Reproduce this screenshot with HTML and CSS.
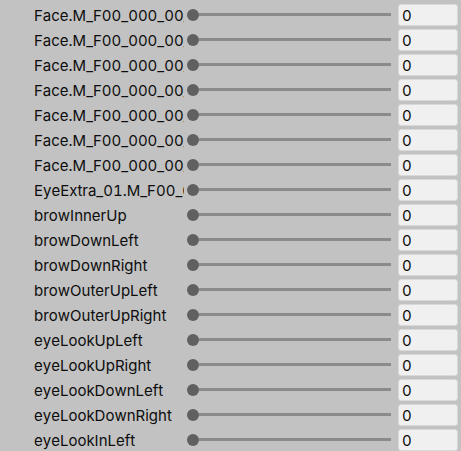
FILE: index.html
```html
<!DOCTYPE html>
<html lang="en">
<head>
    <meta charset="UTF-8">
    <meta name="viewport" content="width=device-width, initial-scale=1.0">
    <title>Blend Shapes</title>
    <link rel="stylesheet" href="styles.css">
</head>
<body>
    <div class="blendshapes" id="blendshapes"></div>

    <script>
        const shapes = [
            "Face.M_F00_000_00_Fcl_ALL_Neutral",
            "Face.M_F00_000_00_Fcl_ALL_Angry",
            "Face.M_F00_000_00_Fcl_ALL_Fun",
            "Face.M_F00_000_00_Fcl_ALL_Joy",
            "Face.M_F00_000_00_Fcl_ALL_Sorrow",
            "Face.M_F00_000_00_Fcl_ALL_Surprised",
            "Face.M_F00_000_00_Fcl_BRW_Angry",
            "EyeExtra_01.M_F00_000_00_EyeExtra_On",
            "browInnerUp",
            "browDownLeft",
            "browDownRight",
            "browOuterUpLeft",
            "browOuterUpRight",
            "eyeLookUpLeft",
            "eyeLookUpRight",
            "eyeLookDownLeft",
            "eyeLookDownRight",
            "eyeLookInLeft"
        ];

        const list = document.getElementById("blendshapes");
        shapes.forEach(name => {
            const row = document.createElement("div");
            row.classList.add("row");

            const label = document.createElement("div");
            label.classList.add("label");
            label.textContent = name;

            const slider = document.createElement("div");
            slider.classList.add("slider");
            const thumb = document.createElement("div");
            thumb.classList.add("thumb");
            const track = document.createElement("div");
            track.classList.add("track");
            slider.appendChild(thumb);
            slider.appendChild(track);

            const field = document.createElement("div");
            field.classList.add("field");
            field.textContent = "0";

            row.appendChild(label);
            row.appendChild(slider);
            row.appendChild(field);
            list.appendChild(row);
        });
    </script>
</body>
</html>
```

FILE: styles.css
```css
body {
    margin: 0;
    padding: 0;
    background-color: #c2c2c2;
    font-family: Inter, "Noto Sans", sans-serif;
    font-size: 15px;
    font-feature-settings: "tnum";
    font-kerning: none;
    color: #0d0d0d;
    overflow: hidden;
}
.blendshapes {
    padding-top: 2px;
}
.row {
    display: flex;
    align-items: center;
    height: 25px;
    padding-left: 34px;
}
.label {
    width: 150px;
    overflow: hidden;
    white-space: nowrap;
    padding-top: 1px;
}
.slider {
    display: flex;
    align-items: center;
    width: 204px;
    margin-left: 3px;
}
.thumb {
    width: 12px;
    height: 12px;
    border-radius: 50%;
    background-color: #606060;
    flex-shrink: 0;
}
.track {
    flex: 1;
    height: 3px;
    background-color: #8b8b8b;
}
.field {
    box-sizing: border-box;
    width: 60px;
    height: 22px;
    margin-left: 7px;
    padding: 1px 0 0 3px;
    border: 1px solid #d9d9d9;
    border-radius: 3px;
    background-color: #f0f0f0;
    color: #0a0a0a;
}
```
